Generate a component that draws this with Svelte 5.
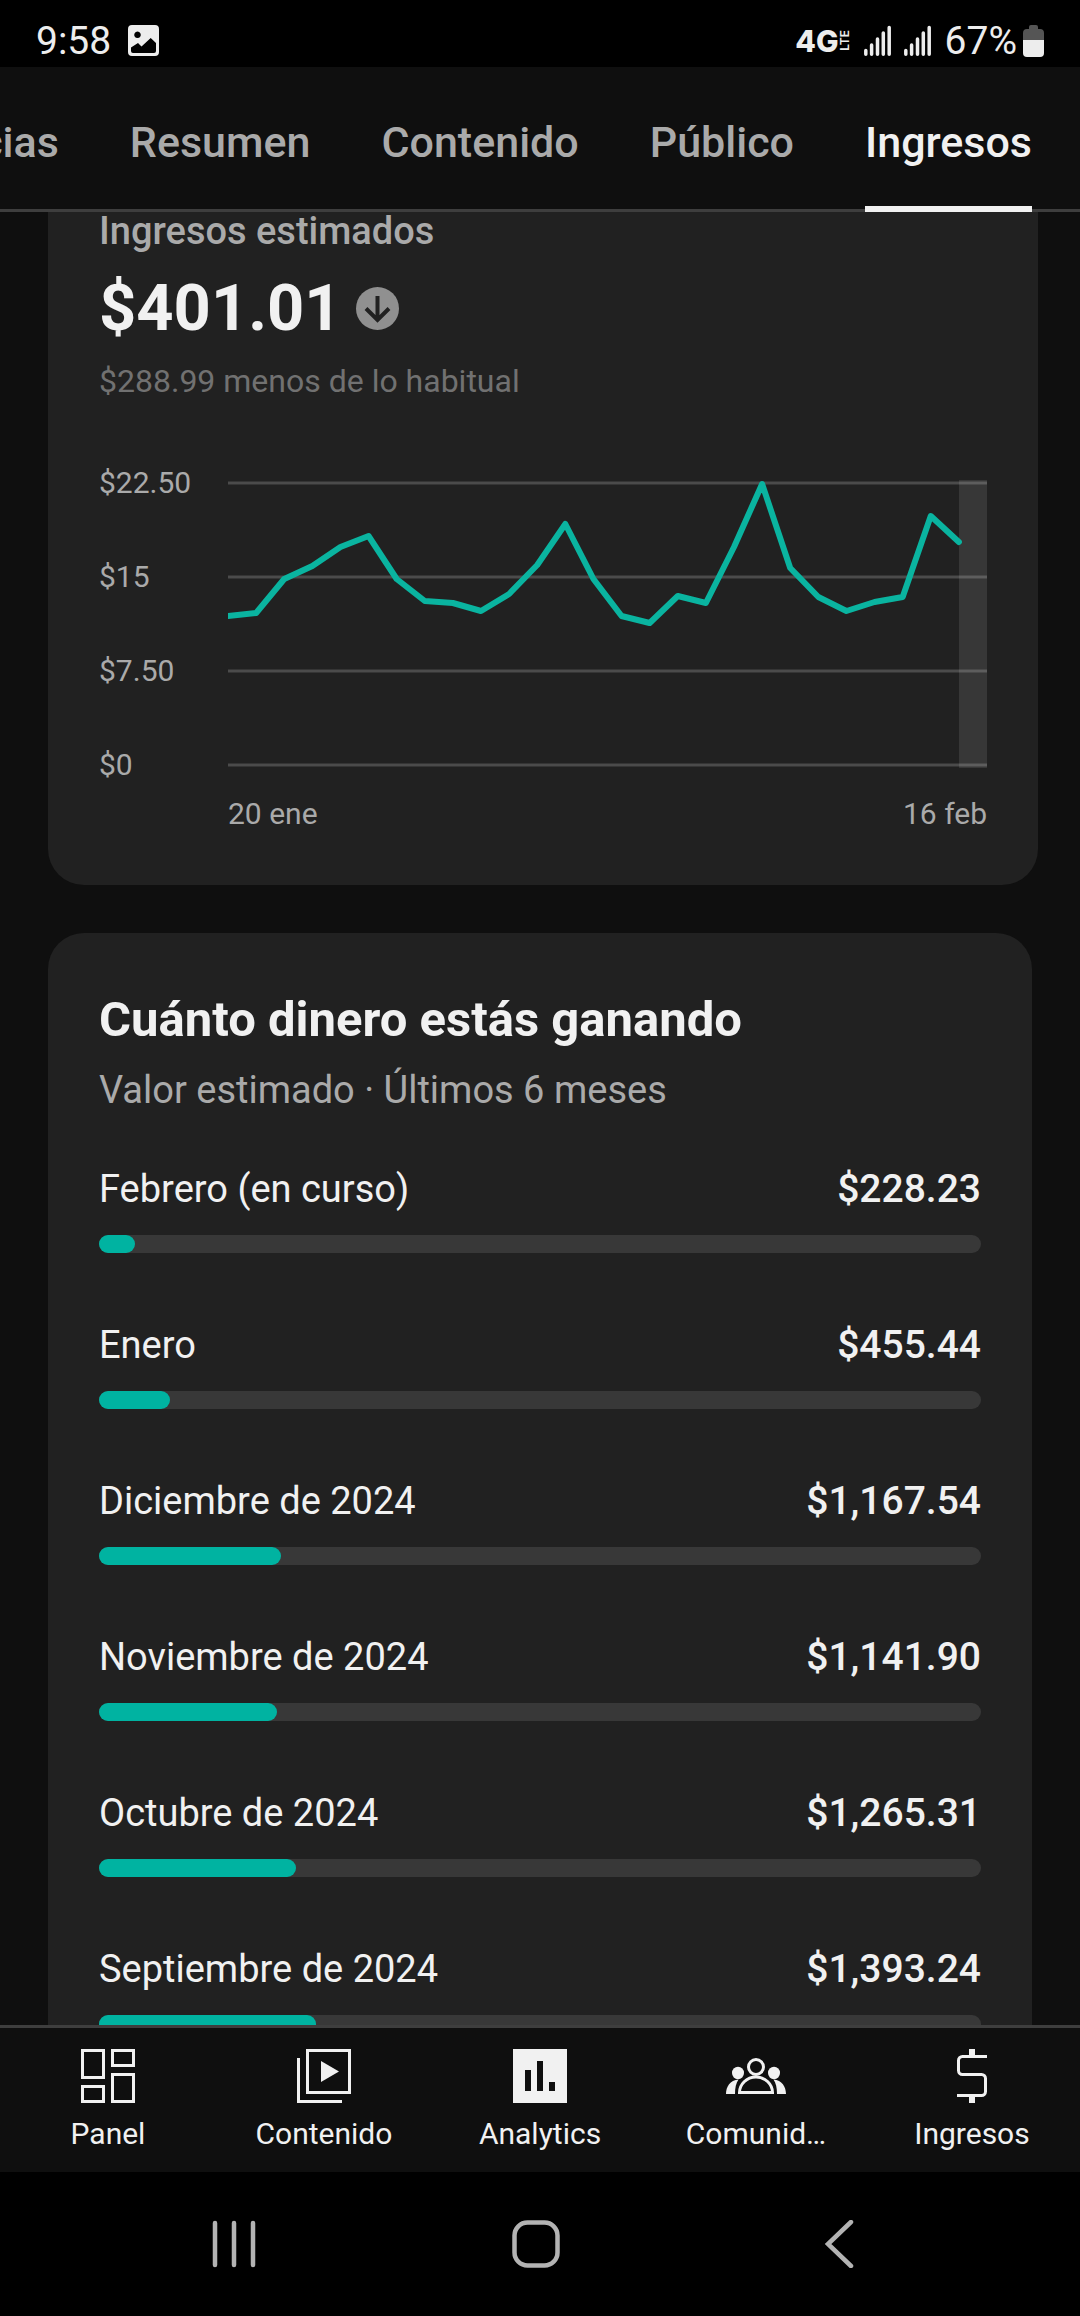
<script>
  const tabs = ['Tendencias', 'Resumen', 'Contenido', 'Público', 'Ingresos'];
  let activeTab = $state('Ingresos');

  const axisLabels = ['$22.50', '$15', '$7.50', '$0'];
  const gridLines = [3, 97, 191, 285];
  // Vertical positions of the daily revenue points, top of plot = 0
  const daily = [
    136, 133, 99, 86, 67, 56, 99, 121, 123, 131, 114, 85, 44, 99,
    136, 143, 116, 123, 67, 4, 88, 117, 131, 122, 117, 36, 62
  ];
  const plotWidth = 759;
  const step = plotWidth / 27;
  const linePoints = daily.map((y, i) => `${i * step},${y}`).join(' ');

  const scaleMax = 5663;
  const months = [
    { name: 'Febrero (en curso)', label: '$228.23', value: 228.23 },
    { name: 'Enero', label: '$455.44', value: 455.44 },
    { name: 'Diciembre de 2024', label: '$1,167.54', value: 1167.54 },
    { name: 'Noviembre de 2024', label: '$1,141.90', value: 1141.9 },
    { name: 'Octubre de 2024', label: '$1,265.31', value: 1265.31 },
    { name: 'Septiembre de 2024', label: '$1,393.24', value: 1393.24 }
  ];
</script>

{#snippet signal()}
  <svg class="signal" viewBox="0 0 27 31" aria-hidden="true">
    <path d="M1.8 25.5v3.7M7.6 20v9.2M13.5 14v15.2M19.3 8v21.2M25.2 2.500v26.700" />
  </svg>
{/snippet}

<div class="app">
  <div class="status">
    <span class="clock">9:58</span>
    <svg class="picture" viewBox="0 0 31 31" aria-hidden="true">
      <path fill-rule="evenodd" d="M4 0h23a4 4 0 0 1 4 4v23a4 4 0 0 1-4 4H4a4 4 0 0 1-4-4V4a4 4 0 0 1 4-4zM9.500 6.500a3.300 3.300 0 1 0 .01 0zM3 22.500V26a2 2 0 0 0 2 2h21a2 2 0 0 0 2-2V18l-5.300-5L13.500 21.500 10 18z" />
    </svg>
    <span class="network">4G</span>
    <span class="lte">LTE</span>
    {@render signal()}
    {@render signal()}
    <span class="percent">67%</span>
    <svg class="battery" viewBox="0 0 21 32" aria-hidden="true">
      <path fill="#555" d="M6 2a2 2 0 0 1 2-2h5a2 2 0 0 1 2 2v2h2a4 4 0 0 1 4 4v7H0V8a4 4 0 0 1 4-4h2z" />
      <path fill="#ededed" d="M0 15h21v13a4 4 0 0 1-4 4H4a4 4 0 0 1-4-4z" />
    </svg>
  </div>

  <nav class="tabs" aria-label="Secciones">
    {#each tabs as tab}
      <button class="tab" class:active={tab === activeTab} onclick={() => (activeTab = tab)}>{tab}</button>
    {/each}
  </nav>

  <main>
    <section class="card estimate">
      <h2>Ingresos estimados</h2>
      <div class="total">
        <strong>$401.01</strong>
        <svg class="down" viewBox="0 0 43 43" aria-hidden="true">
          <circle cx="21.5" cy="21.5" r="21.500" fill="#909090" />
          <path d="M21.500 9v24M10 21.500l11.500 11.500L33 21.500" fill="none" stroke="#212121" stroke-width="4" />
        </svg>
      </div>
      <p class="note">$288.99 menos de lo habitual</p>
      <div class="chart">
        <div class="axis">
          {#each axisLabels as label}<span>{label}</span>{/each}
        </div>
        <svg class="plot" viewBox="0 0 759 288" preserveAspectRatio="none" role="img" aria-label="Ingresos diarios">
          {#each gridLines as y}
            <path d="M0 {y}H759" stroke="#4b4b4b" stroke-width="3" />
          {/each}
          <rect x="731" width="28" height="288" fill="#fff" fill-opacity="0.1" />
          <polyline points={linePoints} />
        </svg>
        <div class="dates"><span>20 ene</span><span>16 feb</span></div>
      </div>
    </section>

    <section class="card earnings">
      <h1>Cuánto dinero estás ganando</h1>
      <p class="subtitle">Valor estimado · Últimos 6 meses</p>
      <ul>
        {#each months as month}
          <li>
            <div class="line"><span>{month.name}</span><b>{month.label}</b></div>
            <div class="track"><div class="fill" style="width: {(month.value / scaleMax) * 100}%"></div></div>
          </li>
        {/each}
      </ul>
    </section>
  </main>

  <nav class="bottom" aria-label="Principal">
    <a href="#panel">
      <svg viewBox="0 0 54 54" aria-hidden="true">
        <path class="stroke" d="M1.500 1.500h21v27h-21zM31.500 1.500h21v15h-21zM1.500 37.500h21v15h-21zM31.500 25.500h21v27h-21z" />
      </svg>
      <span>Panel</span>
    </a>
    <a href="#contenido">
      <svg viewBox="0 0 54 54" aria-hidden="true">
        <path class="stroke" d="M10.500 1.500h42v42h-42zM1.500 9v43.500H45" />
        <path d="M24 12l18 10.500L24 33z" />
      </svg>
      <span>Contenido</span>
    </a>
    <a href="#analytics" aria-current="page">
      <svg viewBox="0 0 54 54" aria-hidden="true">
        <path fill-rule="evenodd" d="M0 0h54v54H0zM12 21v21h6V21zM24 12v30h6V12zM36 33v9h6v-9z" />
      </svg>
      <span>Analytics</span>
    </a>
    <a href="#comunidad">
      <svg class="people" viewBox="0 0 60 54" aria-hidden="true">
        <circle class="stroke" cx="30" cy="18" r="7.500" />
        <path class="stroke" d="M13.500 43.500c0-8 7-15.500 16.500-15.500s16.500 7.500 16.500 15.500z" />
        <ellipse cx="12" cy="24" rx="6" ry="6.200" />
        <ellipse cx="48" cy="24" rx="6" ry="6.200" />
        <path d="M0 45c0-7 4-14 12.500-14.500C10 34 9 39 9 45zM60 45c0-7-4-14-12.500-14.500C50 34 51 39 51 45z" />
      </svg>
      <span>Comunid…</span>
    </a>
    <a href="#ingresos">
      <svg viewBox="0 0 54 54" aria-hidden="true">
        <path class="stroke" d="M42 7.500H17.500a4 4 0 0 0-4 4v10a4 4 0 0 0 4 4h19a4 4 0 0 1 4 4v13a4 4 0 0 1-4 4H12" />
        <path d="M24 0h6v7h-6zM24 47h6v7h-6z" />
      </svg>
      <span>Ingresos</span>
    </a>
  </nav>

  <div class="system">
    <button aria-label="Recientes">
      <svg viewBox="0 0 48 48" aria-hidden="true"><path d="M5 3v42M24 3v42M43 3v42" /></svg>
    </button>
    <button aria-label="Inicio">
      <svg viewBox="0 0 48 48" aria-hidden="true"><rect x="2.500" y="2.500" width="43" height="43" rx="13" /></svg>
    </button>
    <button aria-label="Atrás">
      <svg viewBox="0 0 48 48" aria-hidden="true"><path d="M36 2L13 24l23 22" /></svg>
    </button>
  </div>
</div>

<style>
  :global(body) {
    background: #000;
  }
  .app {
    display: flex;
    flex-direction: column;
    height: 100vh;
    overflow: hidden;
    background: #0f0f0f;
    color: #f1f1f1;
    font-family: Roboto, 'Liberation Sans', sans-serif;
  }
  h1, h2, p, ul {
    margin: 0;
    padding: 0;
  }
  button {
    padding: 0;
    border: 0;
    background: none;
    font: inherit;
    color: inherit;
  }
  svg {
    display: block;
    flex: none;
  }

  .status {
    display: flex;
    align-items: center;
    flex: none;
    height: 53px;
    padding: 14px 36px 0;
    background: #000;
    color: #ededed;
    font-size: 39px;
    line-height: 44px;
  }
  .picture {
    width: 31px;
    height: 31px;
    margin-left: 17px;
    fill: #ededed;
  }
  .network {
    margin-left: auto;
    font-family: Inter, sans-serif;
    font-size: 30px;
    font-weight: 800;
  }
  .lte {
    writing-mode: vertical-rl;
    transform: rotate(180deg);
    font-family: Inter, sans-serif;
    font-size: 12px;
    font-weight: 600;
    line-height: 12px;
  }
  .signal {
    width: 27px;
    height: 31px;
    margin-left: 13px;
    fill: none;
    stroke: #ededed;
    stroke-width: 3.5;
    stroke-linecap: round;
  }
  .percent {
    margin-left: 14px;
  }
  .battery {
    width: 21px;
    height: 32px;
    margin-left: 6px;
  }

  .tabs {
    display: flex;
    justify-content: flex-end;
    gap: 71px;
    flex: none;
    padding-right: 48px;
    overflow: hidden;
    box-shadow: inset 0 -3px #3e3e3e;
    color: #aaa;
    font-size: 43px;
    font-weight: 500;
    line-height: 48px;
  }
  .tab {
    flex: none;
    padding: 51px 0 40px;
    border-bottom: 6px solid transparent;
  }
  .tab.active {
    border-color: #f1f1f1;
    color: #f1f1f1;
  }

  main {
    flex: 1;
    min-height: 0;
    overflow: hidden;
    padding: 0 42px 0 48px;
  }
  .card {
    background: #212121;
  }
  .estimate {
    padding: 0 51px 53px;
    border-radius: 0 0 36px 36px;
  }
  h2 {
    color: #aaa;
    font-size: 38px;
    font-weight: 500;
    line-height: 38px;
  }
  .total {
    display: flex;
    align-items: center;
    gap: 14px;
    margin-top: 19px;
    font-size: 65px;
    line-height: 78px;
  }
  .total strong {
    font-weight: 700;
  }
  .down {
    width: 43px;
    height: 43px;
  }
  .note {
    margin-top: 13px;
    color: #717171;
    font-size: 32px;
    line-height: 42px;
  }
  .chart {
    display: grid;
    grid-template-columns: 129px 1fr;
    align-items: center;
    row-gap: 13px;
    margin-top: 63px;
    color: #aaa;
    font-size: 30px;
    line-height: 36px;
  }
  .axis {
    display: flex;
    flex-direction: column;
    justify-content: space-between;
    height: 318px;
  }
  .plot {
    width: 100%;
    height: 288px;
    overflow: hidden;
  }
  polyline {
    fill: none;
    stroke: #0ab4a0;
    stroke-width: 6;
    stroke-linejoin: round;
    stroke-linecap: round;
  }
  .dates {
    grid-column: 2;
    display: flex;
    justify-content: space-between;
  }

  .earnings {
    margin: 48px 6px 0 0;
    padding: 59px 51px 60px;
    border-radius: 36px;
  }
  h1 {
    font-size: 49px;
    font-weight: 700;
    line-height: 56px;
  }
  .subtitle {
    margin-top: 20px;
    color: #aaa;
    font-size: 38px;
    line-height: 44px;
  }
  ul {
    display: grid;
    gap: 70px;
    margin-top: 55px;
    list-style: none;
  }
  .line {
    display: flex;
    justify-content: space-between;
    margin-bottom: 24px;
    font-size: 38px;
    line-height: 44px;
  }
  .line b {
    font-size: 39px;
    font-weight: 500;
  }
  .track {
    height: 18px;
    border-radius: 9px;
    background: #383838;
  }
  .fill {
    height: 100%;
    border-radius: 9px;
    background: #00b3a1;
  }

  .bottom {
    display: grid;
    grid-template-columns: repeat(5, 1fr);
    flex: none;
    padding: 21px 0 20px;
    border-top: 3px solid #3e3e3e;
    font-size: 30px;
    line-height: 36px;
  }
  .bottom a {
    display: flex;
    flex-direction: column;
    align-items: center;
    gap: 13px;
    color: #f1f1f1;
    text-decoration: none;
  }
  .bottom svg {
    width: 54px;
    height: 54px;
    fill: #f1f1f1;
  }
  .bottom .people {
    width: 60px;
  }
  .bottom .stroke {
    fill: none;
    stroke: #f1f1f1;
    stroke-width: 3;
  }

  .system {
    display: grid;
    grid-template-columns: repeat(3, 1fr);
    flex: none;
    height: 144px;
    padding: 0 90px 0 83px;
    background: #000;
  }
  .system button {
    display: grid;
    place-items: center;
  }
  .system svg {
    width: 48px;
    height: 48px;
    fill: none;
    stroke: #b3b3b3;
    stroke-width: 4.500;
    stroke-linecap: round;
  }
</style>
